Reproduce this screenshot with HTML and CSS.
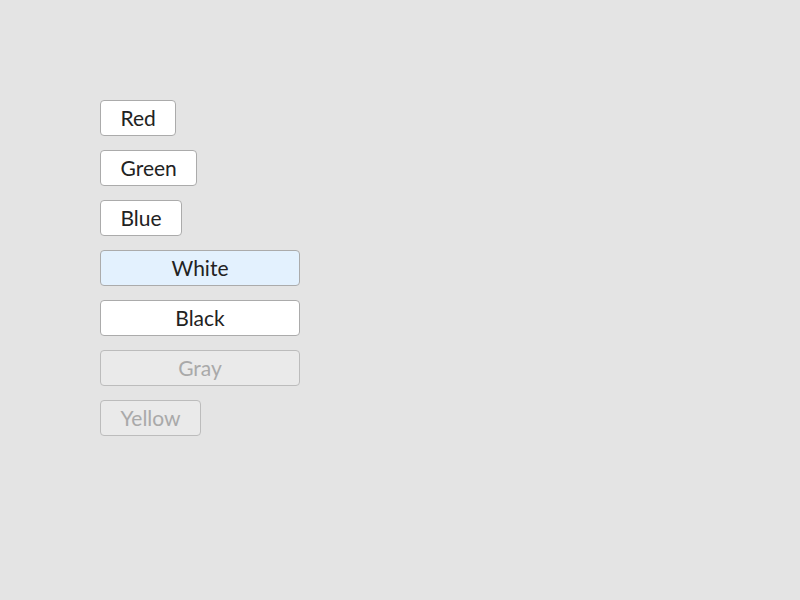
FILE: index.html
```html
<!DOCTYPE html>
<html>
<head>
<meta charset="utf-8">
<link rel="stylesheet" href="styles.css">
</head>
<body>
<div class="list">
  <button class="btn">Red</button>
  <button class="btn">Green</button>
  <button class="btn">Blue</button>
  <button class="btn wide selected">White</button>
  <button class="btn wide">Black</button>
  <button class="btn wide" disabled>Gray</button>
  <button class="btn" disabled>Yellow</button>
</div>
</body>
</html>
```
FILE: styles.css
```css
html, body {
  margin: 0;
  background: #e4e4e4;
  height: 100%;
}
.list {
  display: flex;
  flex-direction: column;
  align-items: flex-start;
  gap: 14px;
  padding: 100px 0 0 100px;
}
.btn {
  box-sizing: border-box;
  height: 36px;
  padding: 0 19.5px;
  margin: 0;
  border: 1px solid #ababab;
  border-radius: 4px;
  background: #ffffff;
  color: #222222;
  font-family: Lato, "Open Sans", sans-serif;
  font-size: 21px;
  line-height: 34px;
  text-align: center;
}
.wide {
  width: 200px;
}
.selected {
  background: #e3f1fe;
}
.btn:disabled {
  background: #eaeaea;
  color: #a9a9a9;
  border-color: #bcbcbc;
}
```
